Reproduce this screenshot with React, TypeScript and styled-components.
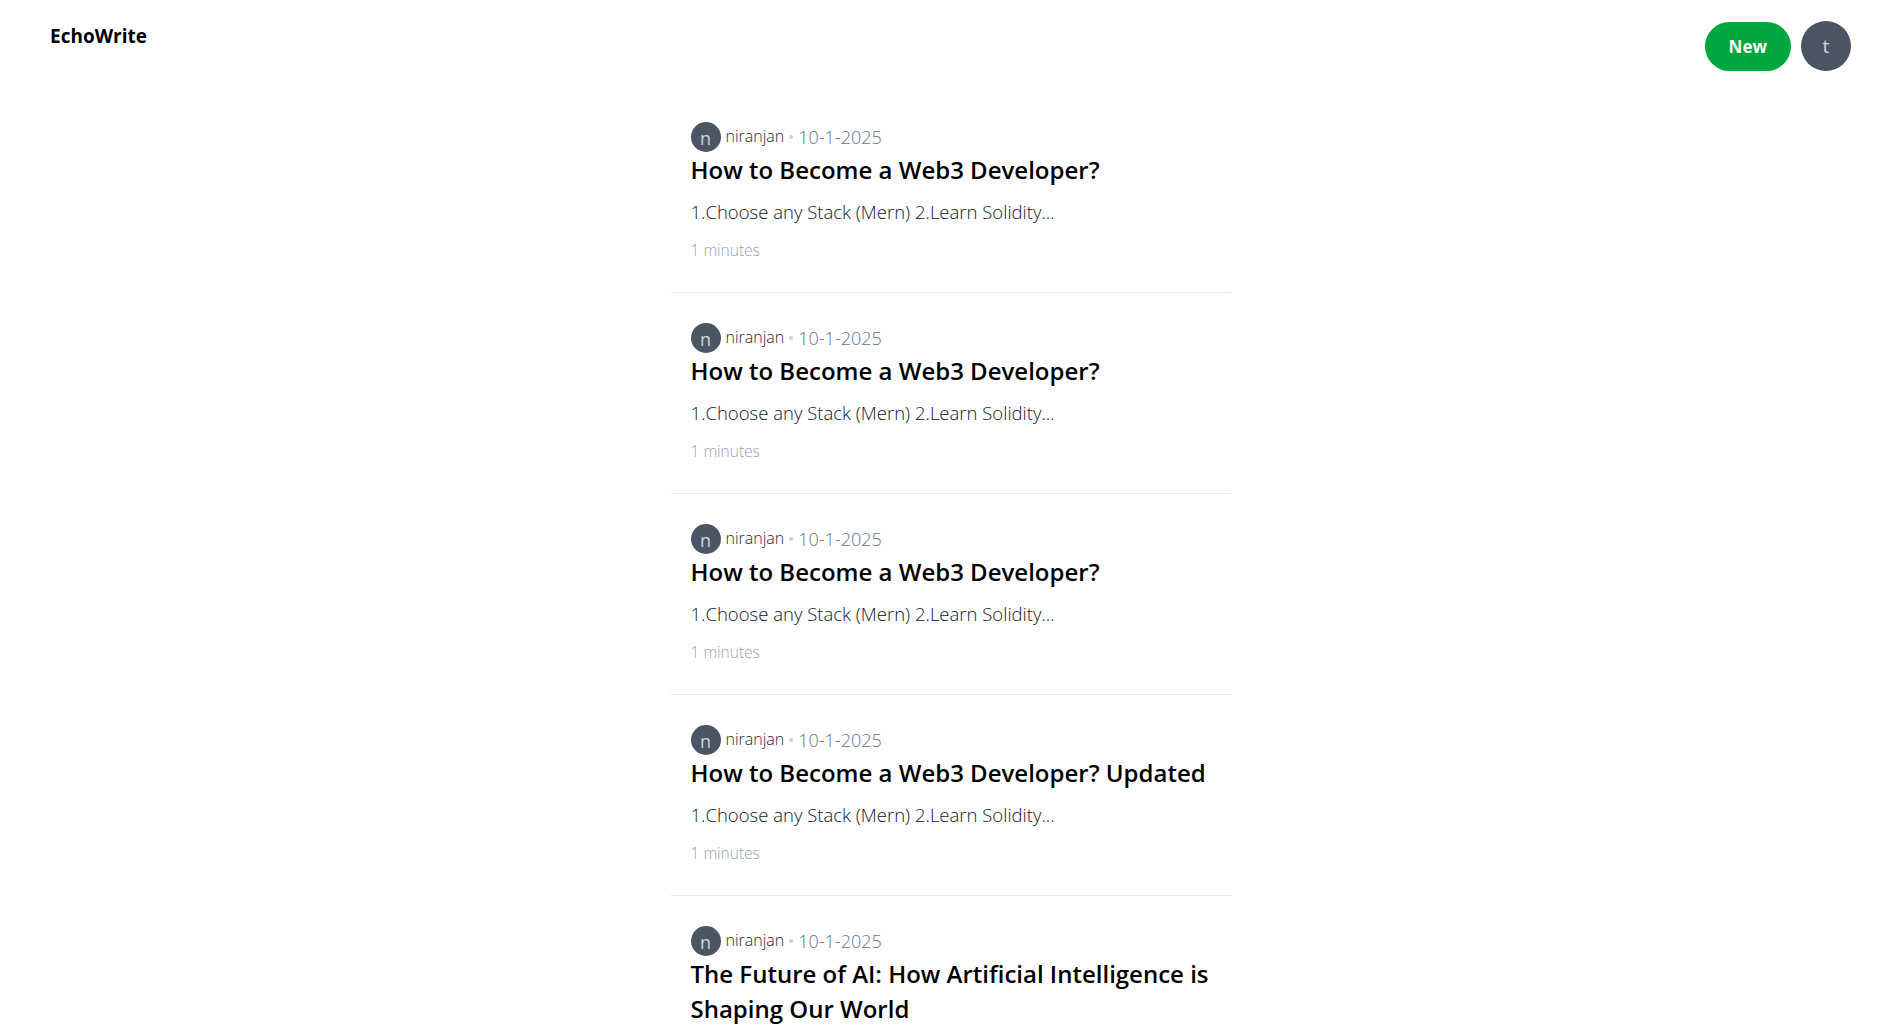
import React from "react";
import styled, { createGlobalStyle } from "styled-components";

const GlobalStyle = createGlobalStyle`
  * { box-sizing: border-box; }
  html, body { margin: 0; padding: 0; background: #ffffff; }
  body { font-family: "Open Sans", "Noto Sans", sans-serif; color: #000; }
`;

const Header = styled.header`
  display: flex;
  justify-content: space-between;
  align-items: flex-start;
  padding: 21px 50px 0 50px;
`;

const Brand = styled.div`
  font-size: 19px;
  line-height: 30px;
  font-weight: 700;
  color: #000;
`;

const Actions = styled.div`
  display: flex;
  align-items: center;
  gap: 10px;
`;

const NewButton = styled.button`
  height: 49px;
  padding: 0 24px;
  border: none;
  border-radius: 999px;
  background: #00a63e;
  color: #ffffff;
  font-family: inherit;
  font-size: 17px;
  font-weight: 700;
  cursor: pointer;
`;

const Avatar = styled.div<{ $size: number; $font: number }>`
  width: ${(p) => p.$size}px;
  height: ${(p) => p.$size}px;
  border-radius: 50%;
  background: #4b5563;
  color: #d1d5db;
  display: flex;
  align-items: center;
  justify-content: center;
  font-size: ${(p) => p.$font}px;
  line-height: 1;
  font-weight: 400;
  flex-shrink: 0;
`;

const AvatarLetter = styled.span`
  display: block;
  transform: translateY(1px);
`;

const Feed = styled.main`
  display: flex;
  justify-content: center;
  padding-top: 21px;
`;

const List = styled.div`
  display: flex;
  flex-direction: column;
  width: 560px;
`;

const Card = styled.article`
  padding: 30px 20px 30px 20px;
  border-bottom: 1px solid #e2e8f0;
  cursor: pointer;
`;

const Meta = styled.div`
  display: flex;
  align-items: center;
  height: 30px;
`;

const AuthorName = styled.span`
  margin-left: 5px;
  margin-top: -3px;
  font-size: 16px;
  font-weight: 300;
  color: #1e293b;
`;

const Dot = styled.span`
  width: 4px;
  height: 4px;
  border-radius: 50%;
  background: #cbd5e1;
  margin: 0 5px;
`;

const DateText = styled.span`
  font-size: 18px;
  font-weight: 300;
  color: #64748b;
`;

const Title = styled.h2`
  margin: 0;
  font-size: 24px;
  line-height: 35px;
  font-weight: 600;
  color: #000;
`;

const Excerpt = styled.p`
  margin: 11px 0 0 0;
  font-size: 18.5px;
  line-height: 28px;
  font-weight: 300;
  color: #0f172a;
`;

const ReadTime = styled.div`
  margin-top: 12px;
  font-size: 15.5px;
  line-height: 24px;
  font-weight: 300;
  color: #94a3b8;
`;

type Blog = { id: number; author: string; date: string; title: string; content: string; minutes: number };

const blogs: Blog[] = [
  { id: 1, author: "niranjan", date: "10-1-2025", title: "How to Become a Web3 Developer?", content: "1.Choose any Stack (Mern) 2.Learn Solidity...", minutes: 1 },
  { id: 2, author: "niranjan", date: "10-1-2025", title: "How to Become a Web3 Developer?", content: "1.Choose any Stack (Mern) 2.Learn Solidity...", minutes: 1 },
  { id: 3, author: "niranjan", date: "10-1-2025", title: "How to Become a Web3 Developer?", content: "1.Choose any Stack (Mern) 2.Learn Solidity...", minutes: 1 },
  { id: 4, author: "niranjan", date: "10-1-2025", title: "How to Become a Web3 Developer? Updated", content: "1.Choose any Stack (Mern) 2.Learn Solidity...", minutes: 1 },
  { id: 5, author: "niranjan", date: "10-1-2025", title: "The Future of AI: How Artificial Intelligence is Shaping Our World", content: "Artificial Intelligence is transforming industries...", minutes: 1 },
];

function BlogCard({ blog }: { blog: Blog }) {
  return (
    <Card>
      <Meta>
        <Avatar $size={30} $font={18}>
          <AvatarLetter>{blog.author[0]}</AvatarLetter>
        </Avatar>
        <AuthorName>{blog.author}</AuthorName>
        <Dot />
        <DateText>{blog.date}</DateText>
      </Meta>
      <Title>{blog.title}</Title>
      <Excerpt>{blog.content}</Excerpt>
      <ReadTime>{blog.minutes} minutes</ReadTime>
    </Card>
  );
}

export default function App() {
  return (
    <>
      <GlobalStyle />
      <Header>
        <Brand>EchoWrite</Brand>
        <Actions>
          <NewButton>New</NewButton>
          <Avatar $size={50} $font={19}>t</Avatar>
        </Actions>
      </Header>
      <Feed>
        <List>
          {blogs.map((b) => (
            <BlogCard key={b.id} blog={b} />
          ))}
        </List>
      </Feed>
    </>
  );
}
